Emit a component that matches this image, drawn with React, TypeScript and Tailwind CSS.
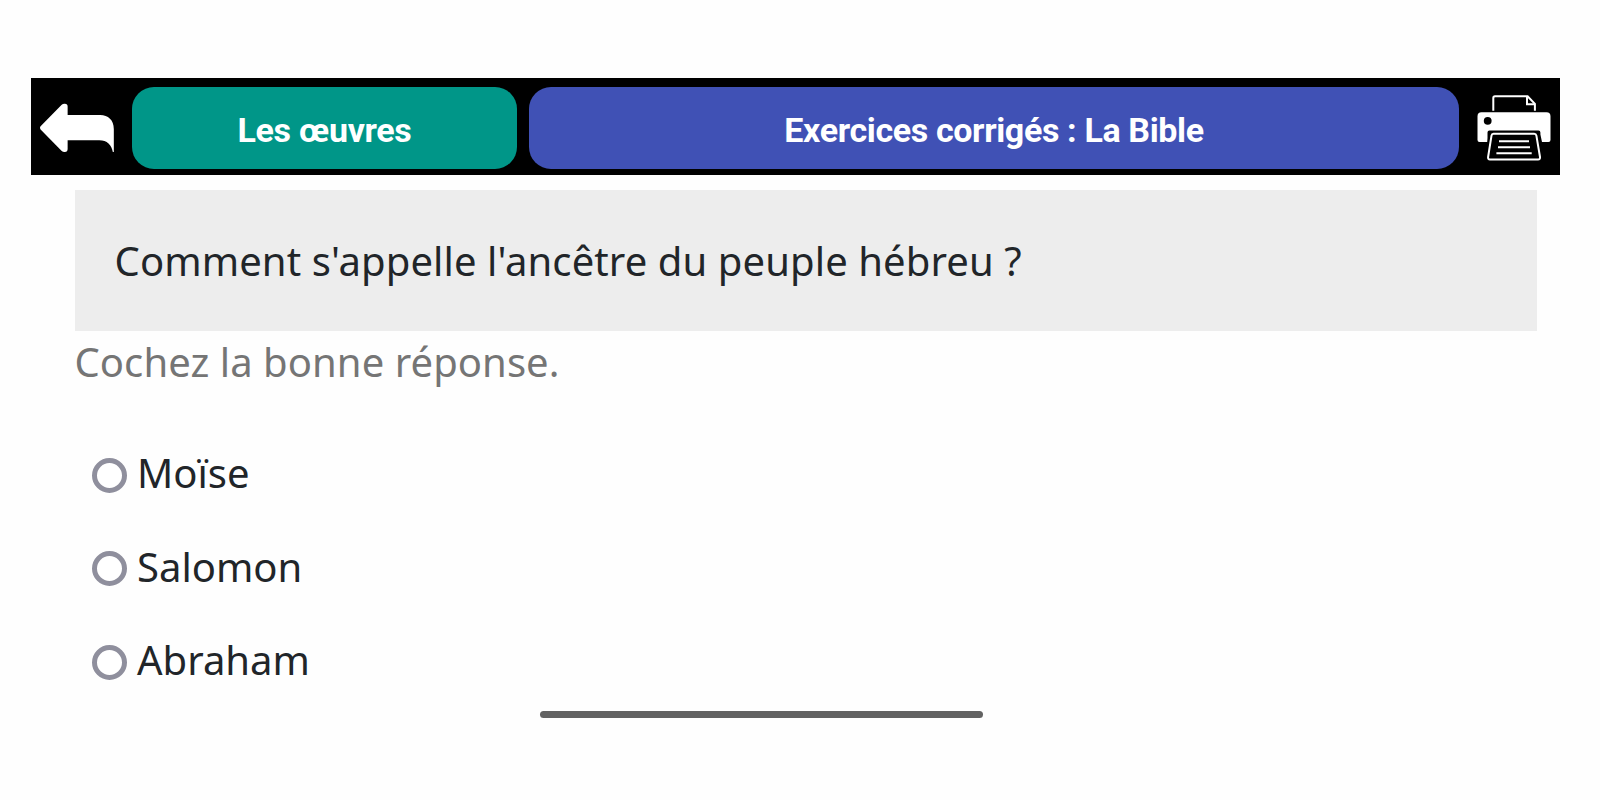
import { useState } from 'react';

const answers = ['Moïse', 'Salomon', 'Abraham'];

function BackIcon() {
  return (
    <svg width="75" height="50" viewBox="0 0 76 50" preserveAspectRatio="none" fill="#fff" aria-hidden="true">
      <path d="M0.6 23.2 L22 1.8 Q23.2 .7 25.2 .8 Q28 1 28 3.5 V12 H61 C69 12 74.8 17 74.8 26 V49 H73.8 C72.6 42 68 37.3 60 37.3 H28 V46 Q28 48.8 25.2 49 Q23.2 49.1 22 48 L0.6 26.4 Q-.6 24.8 .6 23.2Z" />
    </svg>
  );
}

function PrinterIcon() {
  return (
    <svg width="74" height="66" viewBox="0 0 74 66" fill="none" stroke="#fff" aria-hidden="true">
      <path d="M16.3 15.7 V3 Q16.3 1.3 18 1.3 H50.6 L57.9 8.9 V15.7" strokeWidth="2" />
      <path d="M50 1.5 V9.2 H57.8" strokeWidth="2" />
      <path
        d="M4.5 17.2 H69.5 Q73.5 17.2 73.5 21.2 V45 Q73.5 47 71.5 47 H65 L63.4 39.5 V37.5 Q63.4 35.6 61.5 35.6 H12.4 Q10.5 35.6 10.5 37.5 V43 L10.2 47 H2.5 Q.5 47 .5 45 V21.2 Q.5 17.2 4.5 17.2Z"
        fill="#fff"
        stroke="none"
      />
      <circle cx="10.7" cy="25.8" r="3.9" fill="#000" stroke="none" />
      <path
        d="M16.5 38.8 H57.2 Q59 38.8 59.4 40.6 L63 62 Q63.3 64.6 61 64.6 H13 Q10.8 64.6 11.1 62 L14.5 40.6 Q14.8 38.8 16.5 38.8Z"
        fill="#000"
        strokeWidth="2"
      />
      <path d="M22 46.2 H52 M21 52.3 H53 M19.4 58.3 H54.7" strokeWidth="2" />
    </svg>
  );
}

export default function App() {
  const [selected, setSelected] = useState<string | null>(null);

  return (
    <div className="flex h-[800px] w-[1600px] flex-col overflow-hidden bg-[#fefefe] pt-[78px] font-['Noto_Sans',sans-serif] text-[40px] leading-[54px] text-[#212529]">
      <header className="ml-[31px] flex h-[97px] w-[1529px] shrink-0 bg-black pt-[9px] pl-[9px] font-[Roboto,sans-serif] text-[34px] font-bold tracking-[-0.37px] text-white">
        <button type="button" aria-label="Retour" className="mt-[16px] mr-[16px] h-[50px] w-[76px] shrink-0">
          <BackIcon />
        </button>
        <button type="button" className="mr-3 flex h-[82px] w-[385px] shrink-0 items-center justify-center rounded-[22px] bg-[#009688] pt-[3px]">
          Les œuvres
        </button>
        <h1 className="flex h-[82px] w-[930px] shrink-0 items-center justify-center rounded-[22px] bg-[#4051b5] pt-[3px]">
          Exercices corrigés : La Bible
        </h1>
        <button type="button" aria-label="Imprimer" className="mt-[8px] ml-[18px] h-[66px] w-[74px] shrink-0">
          <PrinterIcon />
        </button>
      </header>
      <main className="mt-[15px] ml-[75px] w-[1462px]">
        <div className="flex h-[141px] items-center bg-[#ededed] px-[39.5px]">
          <h2 className="tracking-[0.1px]">Comment s'appelle l'ancêtre du peuple hébreu ?</h2>
        </div>
        <p className="mt-[4px] -ml-[0.5px] tracking-[0.07px] text-[#757575]">Cochez la bonne réponse.</p>
        <div className="mt-[57px] flex flex-col gap-[39.5px] pl-[17px]">
          {answers.map((answer) => (
            <label key={answer} className="flex h-[54px] items-center gap-[10px]">
              <input
                type="radio"
                name="reponse"
                checked={selected === answer}
                onChange={() => setSelected(answer)}
                className="mt-[4px] size-[35px] appearance-none rounded-full border-[5px] border-[#8f8f9d] bg-white checked:bg-[#0060df]"
              />
              <span>{answer}</span>
            </label>
          ))}
        </div>
      </main>
      <div className="mt-[24px] ml-[540px] h-[7px] w-[443px] shrink-0 rounded-full bg-[#626262]" />
    </div>
  );
}
